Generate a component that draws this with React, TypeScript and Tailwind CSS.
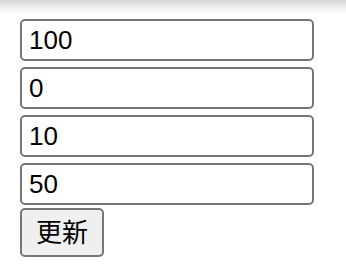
import React from "react";

export default function App() {
  const values = ["100", "0", "10", "50"];
  return (
    <div className="w-[346px] h-[270px] bg-white overflow-hidden font-['Liberation_Sans','Noto_Sans_CJK_JP',sans-serif]">
      <div className="h-[14px] bg-linear-to-b from-[#d6d6d6] via-[#eeeeee] to-white" />
      <div className="pl-[20px] pt-[5px] flex flex-col items-start gap-[6px]">
        {values.map((v, i) => (
          <input
            key={i}
            defaultValue={v}
            className="block w-[294px] h-[42px] shrink-0 border-2 border-[#767676] rounded-[5px] pl-[7px] text-[26px] text-black bg-white outline-none leading-none font-['Liberation_Sans',sans-serif]"
          />
        ))}
        <button className="-mt-[3px] w-[84px] h-[49px] shrink-0 border-2 border-[#767676] rounded-[5px] bg-[#efefef] text-[26px] text-black leading-none flex items-center justify-center font-['Liberation_Sans','Noto_Sans_CJK_JP',sans-serif]">
          更新
        </button>
      </div>
    </div>
  );
}
